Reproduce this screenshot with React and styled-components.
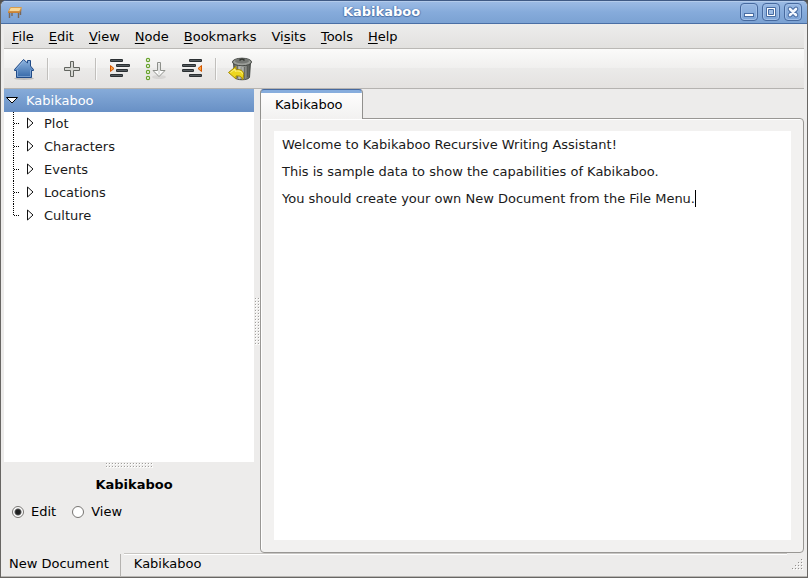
import React, { useState } from "react";
import styled, { createGlobalStyle, css } from "styled-components";

const GlobalStyle = createGlobalStyle`
  *, *::before, *::after { box-sizing: border-box; }
  html, body { margin: 0; background: #55534f; }
  body, button, input, textarea {
    font-family: "DejaVu Sans", Verdana, sans-serif;
    font-size: 13px;
    color: #000;
  }
  button { margin: 0; padding: 0; border: 0; background: none; }
`;

const Window = styled.div`
  display: flex;
  flex-direction: column;
  height: 100vh;
  overflow: hidden;
  background: #edeceb;
  border: 1px solid #686663;
  border-top-color: #3f5a85;
  border-radius: 6px 6px 0 0;
`;

const TitleBar = styled.header`
  display: grid;
  grid-template-columns: auto 1fr auto;
  align-items: center;
  flex: none;
  height: 23px;
  padding: 0 5px 0 6px;
  background: linear-gradient(#9dbce5, #86abdb 50%, #7ba2d3);
  border-bottom: 1px solid #4a6fa5;
  box-shadow: inset 0 1px #b3cbeb;
`;

const WindowTitle = styled.h1`
  margin: 0;
  font-size: 13px;
  line-height: 20px;
  text-align: center;
  color: #fff;
  text-shadow: 0 1px 1px #4b70a6, 1px 0 1px #5c82b8, -1px 0 1px #5c82b8;
`;

const WindowButtons = styled.div`
  display: flex;
  justify-content: flex-end;
  gap: 4px;
`;

const WindowButton = styled.button`
  width: 18px;
  height: 18px;
  border: 1px solid #46699e;
  border-radius: 4px;
  background: linear-gradient(#98b8e3, #7da4d6);
  box-shadow: inset 0 0 0 1px #a2c0e8;
  svg { display: block; }
`;

const Body = styled.div`
  display: flex;
  flex-direction: column;
  flex: 1;
  min-height: 0;
  padding: 0 3px;
  border-bottom: 1px solid #b9b7b4;
`;

const MenuBar = styled.nav`
  display: flex;
  flex: none;
  gap: 15px;
  height: 25px;
  padding: 0 8px;
  background: linear-gradient(#ededec, #e2e1df);
  border-bottom: 1px solid #bab8b5;
`;

const MenuItem = styled.button`
  line-height: 23px;
  u { text-underline-offset: 2px; text-decoration-thickness: 1px; }
`;

const ToolBar = styled.div`
  display: flex;
  align-items: center;
  flex: none;
  height: 40px;
  padding: 0 2px;
  background: linear-gradient(#fbfbfa, #f0efee 50%, #ebeae9 50%, #e4e2e0);
  border-bottom: 1px solid #b5b3b0;
`;

const ToolButton = styled.button`
  display: grid;
  place-items: center;
  width: 36px;
  height: 36px;
`;

const ToolSeparator = styled.div`
  width: 2px;
  height: 22px;
  margin: 0 5px;
  border-left: 1px solid #c1bfbc;
  background: #fafafa;
`;

const Workspace = styled.div`
  display: flex;
  flex: 1;
  min-height: 0;
`;

const Sidebar = styled.aside`
  display: flex;
  flex-direction: column;
  flex: none;
  width: 250px;
`;

const Tree = styled.ul`
  flex: 1;
  margin: 0;
  padding: 0;
  list-style: none;
  background: #fff;
`;

const Branches = styled.ul`
  margin: 0;
  padding: 0;
  list-style: none;
`;

const TreeRow = styled.button`
  display: flex;
  align-items: center;
  width: 100%;
  height: 23px;
  line-height: 23px;
  text-align: left;
  color: #1a1a1a;
  svg { flex: none; }
  ${({ $selected }) =>
    $selected &&
    css`
      color: #fff;
      background: linear-gradient(#86abd9, #6890c5);
    `}
`;

const Grip = styled.div`
  display: grid;
  place-items: center;
  flex: none;
  ${({ $vertical }) => ($vertical ? "width: 6px; cursor: col-resize;" : "height: 6px; cursor: row-resize;")}
`;

const NodePanel = styled.section`
  flex: none;
  height: 85px;
  padding: 6px 8px 0;
`;

const NodeTitle = styled.h2`
  margin: 0;
  padding-left: 10px;
  font-size: 13px;
  line-height: 22px;
  text-align: center;
`;

const RadioRow = styled.div`
  display: flex;
  gap: 16px;
  padding-top: 5px;
`;

const RadioLabel = styled.label`
  display: flex;
  align-items: center;
  gap: 7px;
  line-height: 22px;
`;

const Radio = styled.input`
  appearance: none;
  width: 12px;
  height: 12px;
  margin: 0;
  border: 1px solid #777572;
  border-radius: 50%;
  background: #fff;
  &:checked {
    background: radial-gradient(circle, #1d1f1f 0 2px, #555 3px, #fff 4px);
  }
`;

const Notebook = styled.main`
  display: flex;
  flex-direction: column;
  flex: 1;
  min-width: 0;
`;

const Tab = styled.button`
  align-self: flex-start;
  z-index: 1;
  height: 30px;
  margin-bottom: -1px;
  padding: 0 19px 0 14px;
  line-height: 22px;
  background: linear-gradient(#87addd, #87addd) top / 100% 3px no-repeat,
    linear-gradient(#fff, #f2f1f0);
  border: 1px solid #91908d;
  border-top-color: #46699e;
  border-bottom: 0;
  border-radius: 4px 4px 0 0;
`;

const Page = styled.div`
  display: flex;
  flex: 1;
  min-height: 0;
  padding: 12px 12px 12px 13px;
  background: #f2f1f0;
  border: 1px solid #999794;
  border-radius: 0 4px 4px 4px;
  box-shadow: inset 1px 1px #fff;
`;

const Editor = styled.div`
  position: relative;
  display: flex;
  flex: 1;
  background: #fff;
`;

const EditorText = styled.textarea`
  flex: 1;
  min-width: 0;
  padding: 0 8px;
  border: 0;
  outline: 0;
  resize: none;
  line-height: 27px;
  color: #1a1a1a;
  background: transparent;
`;

const Caret = styled.span`
  position: absolute;
  top: 59px;
  left: 421px;
  width: 1px;
  height: 17px;
  background: #000;
`;

const StatusBar = styled.footer`
  display: flex;
  align-items: center;
  flex: none;
  height: 23px;
  line-height: 20px;
`;

const StatusFile = styled.span`
  padding: 0 11px 2px 5px;
  border-right: 1px solid #b5b3b0;
`;

const StatusNode = styled.span`
  flex: 1;
  align-self: stretch;
  margin: 0 5px 0 3px;
  padding-left: 10px;
  line-height: 19px;
  border-top: 1px solid #c8c6c3;
  box-shadow: inset 0 1px #fff;
`;

const Table = () => (
  <svg width="16" height="14" viewBox="0 0 16 14" aria-hidden="true">
    <path d="M2.500 7v6M5 6v5M11.500 7v6M13.500 5v5" stroke="#76675c" strokeWidth="1.400" />
    <path d="M3.500 2.500h11L12.500 6.500h-11z" fill="#f8d797" stroke="#d69c4e" />
    <path d="M1 6.500h11.500l2-3V5l-2 3H1z" fill="#c98235" />
  </svg>
);

const Minimize = () => (
  <svg width="16" height="16" viewBox="0 0 16 16" aria-hidden="true">
    <rect x="3.5" y="9.5" width="9" height="3" fill="#fff" stroke="#486ca2" />
  </svg>
);

const Maximize = () => (
  <svg width="16" height="16" viewBox="0 0 16 16" aria-hidden="true">
    <path d="M3.500 3.500h9v9h-9z" fill="#fff" stroke="#486ca2" />
    <path d="M5.500 5.500h5v5h-5z" fill="#9dbce5" stroke="#486ca2" />
  </svg>
);

const Close = () => (
  <svg width="16" height="16" viewBox="0 0 16 16" aria-hidden="true">
    <path d="M5 5l6 6M11 5l-6 6" stroke="#486ca2" strokeWidth="4.600" strokeLinecap="round" />
    <path d="M5 5l6 6M11 5l-6 6" stroke="#f4f8fe" strokeWidth="2.600" strokeLinecap="round" />
  </svg>
);

const Home = () => (
  <svg width="24" height="24" viewBox="0 0 24 24" aria-hidden="true">
    <defs>
      <linearGradient id="home" x2="0" y2="1">
        <stop stopColor="#8fb5e0" />
        <stop offset="1" stopColor="#3568a8" />
      </linearGradient>
    </defs>
    <ellipse cx="12" cy="21.500" rx="10" ry="1.500" fill="#000" opacity=".18" />
    <path d="M11.500 2.500L2.500 12.500v1h2v7h15v-7h2v-1L18.500 9V3.500h-3V6z" fill="url(#home)" stroke="#204a87" strokeLinejoin="round" />
    <path d="M11.500 4L4.500 12M5.500 13v6.500h13V13" fill="none" stroke="#a9c8ed" opacity=".5" />
  </svg>
);

const Plus = () => (
  <svg width="24" height="24" viewBox="0 0 24 24" aria-hidden="true">
    <path d="M10.500 4.500h3v6h6v3h-6v6h-3v-6h-6v-3h6z" fill="#d7d8d4" stroke="#62645f" />
  </svg>
);

const Bars = ({ rows }) =>
  rows.map(([x, y, w]) => (
    <g key={y}>
      <rect x={x} y={y} width={w} height="3" rx="1" fill="#2b3033" />
      <path d={`M${x + 1} ${y + 1.5}h${w - 2}`} stroke="#555b5e" />
    </g>
  ));

const Indent = () => (
  <svg width="24" height="24" viewBox="0 0 24 24" aria-hidden="true">
    <Bars rows={[[2, 2, 13], [8, 7, 14], [8, 12, 12], [2, 17, 13]]} />
    <path d="M2.500 8.500v6L6 11.500z" fill="#fca13d" stroke="#d45500" />
  </svg>
);

const Outdent = () => (
  <svg width="24" height="24" viewBox="0 0 24 24" aria-hidden="true">
    <Bars rows={[[9, 2, 13], [2, 7, 14], [2, 12, 12], [9, 17, 13]]} />
    <path d="M21.500 8.500v6L18 11.500z" fill="#fca13d" stroke="#d45500" />
  </svg>
);

const MoveDown = () => (
  <svg width="24" height="24" viewBox="0 0 24 24" aria-hidden="true">
    <ellipse cx="15" cy="20" rx="7" ry="2" fill="#000" opacity=".07" />
    {[3, 9, 15, 21].map((y) => (
      <circle key={y} cx="4" cy={y} r="1.600" fill="#fff" stroke="#68a22c" strokeWidth="1.200" />
    ))}
    <path d="M13.500 5.500h3v8h4.500l-6 6-6-6h4.500z" fill="#fdfdfd" stroke="#8d8f8a" strokeLinejoin="round" />
    <path d="M15 6.500v11" stroke="#c7c9c5" />
  </svg>
);

const TrashUndo = () => (
  <svg width="26" height="26" viewBox="0 0 26 26" aria-hidden="true">
    <defs>
      <linearGradient id="can">
        <stop stopColor="#5a5d59" />
        <stop offset=".4" stopColor="#c6c8c3" />
        <stop offset="1" stopColor="#4a4d49" />
      </linearGradient>
    </defs>
    <path d="M6.500 6l1 15.500c2 3 13 3 15 0L23.500 6z" fill="url(#can)" stroke="#4a4d49" />
    <path d="M10.500 10v12M14 11v13M17.500 11v12M20.500 10v11" stroke="#41443f" opacity=".5" />
    <ellipse cx="15" cy="6" rx="9.500" ry="3.800" fill="#9b9e99" stroke="#3f423e" />
    <ellipse cx="15" cy="5" rx="7" ry="2.500" fill="#747773" />
    <path d="M12.500 4.500q2.500-3 5 0" fill="none" stroke="#31342f" strokeWidth="1.500" />
    <path d="M1.500 16.500L9 10.500v3.300c6-.8 9.500 1.700 6.500 10.200-.5-3.500-2.500-4.500-6.500-4V23z" fill="#edd61f" stroke="#a68a00" strokeLinejoin="round" />
    <path d="M3.500 16.500L8 13v2.200c4-.6 7-.2 7.500 3" fill="none" stroke="#fff48a" />
  </svg>
);

const RootArrow = () => (
  <svg width="22" height="23" viewBox="0 0 22 23" aria-hidden="true">
    <path d="M2.500 8.500h11L8 14z" fill="#fff" stroke="#000" />
  </svg>
);

const BranchArrow = ({ last }) => (
  <svg width="40" height="23" viewBox="0 0 40 23" aria-hidden="true">
    <path d={`M9.500 0V${last ? 12 : 23}`} stroke="#000" strokeDasharray="1 1" />
    <path d="M10 11.500h6" stroke="#000" strokeDasharray="1 1" />
    <path d="M23.500 6v10l5.500-5z" fill="#fff" stroke="#111" />
  </svg>
);

const Dots = ({ columns, rows, id }) => (
  <svg width={columns * 3} height={rows * 3} aria-hidden="true">
    <defs>
      <pattern id={id} width="3" height="3" patternUnits="userSpaceOnUse">
        <path d="M1 1h2v2H1z" fill="#fbfbfa" />
        <path d="M1 1h1v1H1z" fill="#a09e9b" />
      </pattern>
    </defs>
    <rect width="100%" height="100%" fill={`url(#${id})`} />
  </svg>
);

const SizeGrip = () => (
  <svg width="12" height="12" viewBox="0 0 12 12" aria-hidden="true">
    {[[9, 0], [6, 3], [9, 3], [3, 6], [6, 6], [9, 6], [0, 9], [3, 9], [6, 9], [9, 9]].map(([x, y]) => (
      <g key={`${x}-${y}`}>
        <path d={`M${x + 1} ${y + 1}h1v1h-1z`} fill="#fff" />
        <path d={`M${x} ${y}h1v1h-1z`} fill="#92908d" />
      </g>
    ))}
  </svg>
);

const menus = ["File", "Edit", "View", "Node", "Bookmarks", "Visits", "Tools", "Help"];
const hotkeys = { Visits: 2 };
const branches = ["Plot", "Characters", "Events", "Locations", "Culture"];
const welcome = [
  "Welcome to Kabikaboo Recursive Writing Assistant!",
  "This is sample data to show the capabilities of Kabikaboo.",
  "You should create your own New Document from the File Menu.",
].join("\n");

const MenuLabel = ({ text }) => {
  const at = hotkeys[text] ?? 0;
  return (
    <MenuItem type="button">
      {text.slice(0, at)}
      <u>{text[at]}</u>
      {text.slice(at + 1)}
    </MenuItem>
  );
};

export default function App() {
  const [mode, setMode] = useState("Edit");
  const [text, setText] = useState(welcome);

  return (
    <>
      <GlobalStyle />
      <Window>
        <TitleBar>
          <Table />
          <WindowTitle>Kabikaboo</WindowTitle>
          <WindowButtons>
            <WindowButton type="button" aria-label="Minimize"><Minimize /></WindowButton>
            <WindowButton type="button" aria-label="Maximize"><Maximize /></WindowButton>
            <WindowButton type="button" aria-label="Close"><Close /></WindowButton>
          </WindowButtons>
        </TitleBar>
        <Body>
          <MenuBar>
            {menus.map((name) => <MenuLabel key={name} text={name} />)}
          </MenuBar>
          <ToolBar role="toolbar">
            <ToolButton type="button" aria-label="Home"><Home /></ToolButton>
            <ToolSeparator />
            <ToolButton type="button" aria-label="Add node"><Plus /></ToolButton>
            <ToolSeparator />
            <ToolButton type="button" aria-label="Indent"><Indent /></ToolButton>
            <ToolButton type="button" aria-label="Move down"><MoveDown /></ToolButton>
            <ToolButton type="button" aria-label="Outdent"><Outdent /></ToolButton>
            <ToolSeparator />
            <ToolButton type="button" aria-label="Restore deleted"><TrashUndo /></ToolButton>
          </ToolBar>
          <Workspace>
            <Sidebar>
              <Tree>
                <li>
                  <TreeRow type="button" $selected><RootArrow />Kabikaboo</TreeRow>
                  <Branches>
                    {branches.map((name, i) => (
                      <li key={name}>
                        <TreeRow type="button">
                          <BranchArrow last={i === branches.length - 1} />
                          {name}
                        </TreeRow>
                      </li>
                    ))}
                  </Branches>
                </li>
              </Tree>
              <Grip><Dots id="dots-h" columns={16} rows={2} /></Grip>
              <NodePanel>
                <NodeTitle>Kabikaboo</NodeTitle>
                <RadioRow>
                  {["Edit", "View"].map((name) => (
                    <RadioLabel key={name}>
                      <Radio type="radio" name="mode" checked={mode === name} onChange={() => setMode(name)} />
                      {name}
                    </RadioLabel>
                  ))}
                </RadioRow>
              </NodePanel>
            </Sidebar>
            <Grip $vertical><Dots id="dots-v" columns={2} rows={16} /></Grip>
            <Notebook>
              <Tab type="button">Kabikaboo</Tab>
              <Page>
                <Editor>
                  <EditorText
                    aria-label="Document text"
                    spellCheck={false}
                    value={text}
                    onChange={(e) => setText(e.target.value)}
                  />
                  <Caret />
                </Editor>
              </Page>
            </Notebook>
          </Workspace>
          <StatusBar>
            <StatusFile>New Document</StatusFile>
            <StatusNode>Kabikaboo</StatusNode>
            <SizeGrip />
          </StatusBar>
        </Body>
      </Window>
    </>
  );
}
